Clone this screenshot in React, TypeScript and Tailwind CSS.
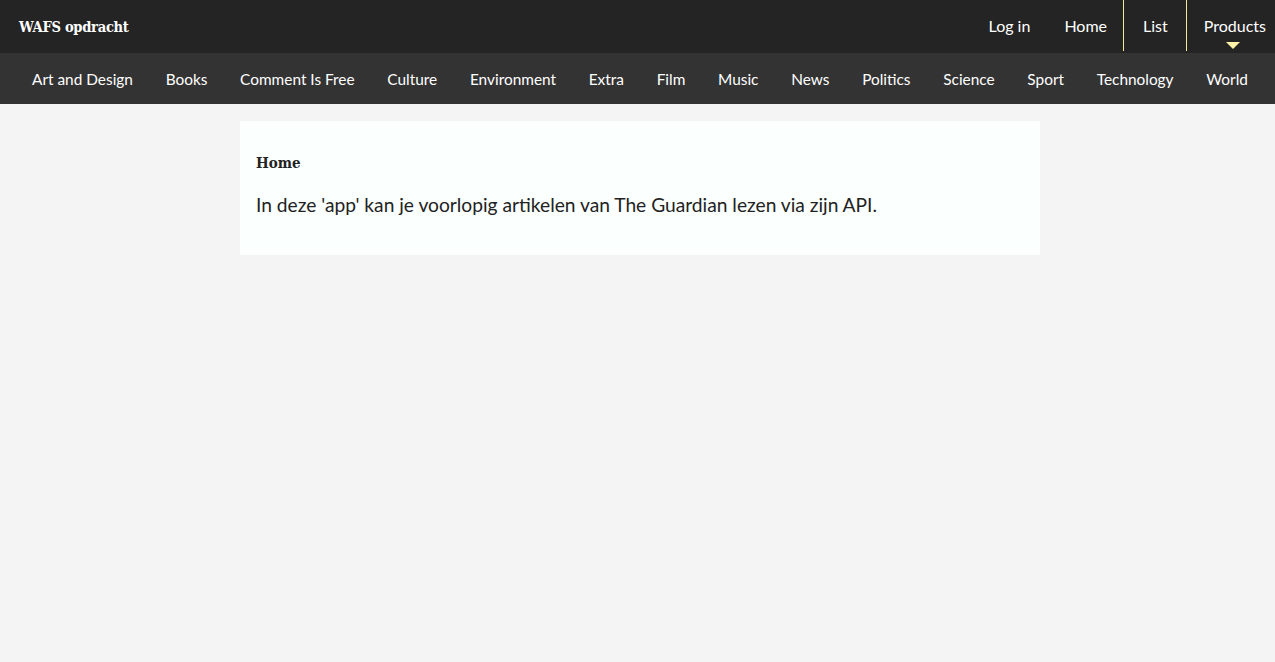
const sections = [
  "Art and Design",
  "Books",
  "Comment Is Free",
  "Culture",
  "Environment",
  "Extra",
  "Film",
  "Music",
  "News",
  "Politics",
  "Science",
  "Sport",
  "Technology",
  "World",
];

const App = () => {
  return (
    <div className="min-h-screen bg-[#f4f4f4] font-['Lato','Open_Sans',sans-serif]">
      <header className="h-[53px] bg-[#242424] flex items-start justify-between">
        <a className="pl-[19px] pt-[16px] text-white text-[14.6px] font-bold font-['DejaVu_Serif_Condensed','DejaVu_Serif',serif] tracking-[-0.3px]">
          WAFS opdracht
        </a>
        <ul className="flex h-[51px] text-white text-[16px]">
          <li className="px-[18px] flex items-center">Log in</li>
          <li className="px-[16px] flex items-center">Home</li>
          <li className="border-l border-[#f3ea9c] pl-[19px] pr-[18px] flex items-center">List</li>
          <li className="relative border-l border-[#f3ea9c] pl-[17px] pr-[9px] flex items-center">
            Products
            <span className="absolute left-[39px] top-[42px] w-0 h-0 border-l-[7px] border-r-[7px] border-t-[7px] border-l-transparent border-r-transparent border-t-[#fff3a8]" />
          </li>
        </ul>
      </header>
      <nav className="h-[51px] bg-[#333333] pl-[32px] pr-[27px] pt-[3px] flex items-center">
        <ul className="w-full flex justify-between text-white text-[15.4px]">
          {sections.map((s, i) => (
            <li key={i}>{s}</li>
          ))}
        </ul>
      </nav>
      <main className="pt-[17px] pl-[5px] flex justify-center">
        <section className="w-[800px] bg-[#fbfffe] px-[16px] pt-[32px] pb-[37px]">
          <h2 className="text-[15px] font-bold text-[#222] font-['DejaVu_Serif_Condensed','DejaVu_Serif',serif] leading-[20px]">
            Home
          </h2>
          <p className="mt-[19px] text-[19.2px] text-[#222] leading-[26px]">
            In deze 'app' kan je voorlopig artikelen van The Guardian lezen via zijn API.
          </p>
        </section>
      </main>
    </div>
  );
};

export default App;
